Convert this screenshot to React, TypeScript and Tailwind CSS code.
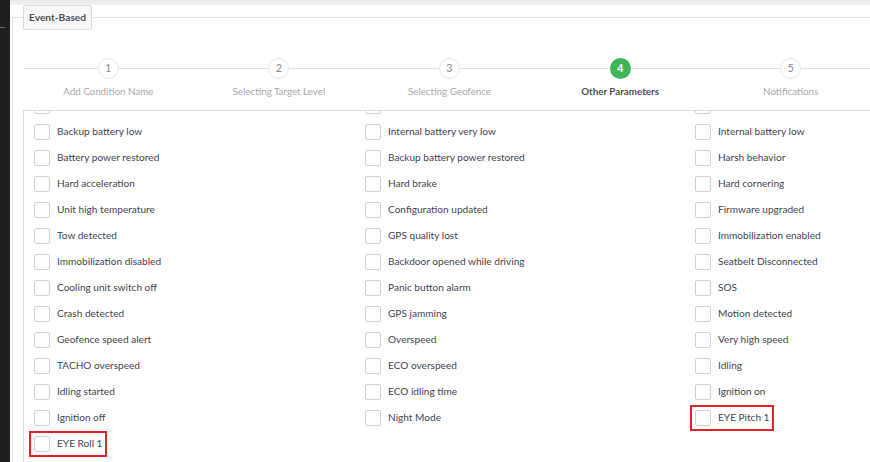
import React from 'react';

const steps = [
  { n: 1, label: 'Add Condition Name' },
  { n: 2, label: 'Selecting Target Level' },
  { n: 3, label: 'Selecting Geofence' },
  { n: 4, label: 'Other Parameters', active: true },
  { n: 5, label: 'Notifications' },
];

// rows of three, left to right
const events: string[] = [
  'Unit is moving', 'Main power cut', 'Low battery',
  'Backup battery low', 'Internal battery very low', 'Internal battery low',
  'Battery power restored', 'Backup battery power restored', 'Harsh behavior',
  'Hard acceleration', 'Hard brake', 'Hard cornering',
  'Unit high temperature', 'Configuration updated', 'Firmware upgraded',
  'Tow detected', 'GPS quality lost', 'Immobilization enabled',
  'Immobilization disabled', 'Backdoor opened while driving', 'Seatbelt Disconnected',
  'Cooling unit switch off', 'Panic button alarm', 'SOS',
  'Crash detected', 'GPS jamming', 'Motion detected',
  'Geofence speed alert', 'Overspeed', 'Very high speed',
  'TACHO overspeed', 'ECO overspeed', 'Idling',
  'Idling started', 'ECO idling time', 'Ignition on',
  'Ignition off', 'Night Mode', 'EYE Pitch 1',
  'EYE Roll 1',
];

const highlighted = ['EYE Pitch 1', 'EYE Roll 1'];

const Check = ({ label }: { label: string }) => {
  const marked = highlighted.includes(label);
  return (
    <div className="flex h-[26px] items-center">
      <label
        className={
          'inline-flex h-4 items-center gap-[7px] ' +
          (marked ? 'outline-2 outline-offset-[3px] outline-[#e5202a]' : '')
        }
      >
        <span className="h-4 w-4 shrink-0 rounded-[2px] border border-[#cfd3d8] bg-white" />
        <span className="whitespace-nowrap text-[10.1px] text-[#3f4550]">{label}</span>
      </label>
    </div>
  );
};

export default function App() {
  return (
    <div className="flex h-[462px] w-[870px] overflow-hidden bg-white font-['Lato','Open_Sans',sans-serif]">
      {/* dark sidebar edge */}
      <div className="w-[10px] shrink-0 bg-[#1e1e1e] pt-[27px]">
        <div className="h-px w-[5px] bg-[#6b6b6b]" />
      </div>

      <div className="flex min-w-0 flex-1 flex-col bg-[#f6f6f6]">
        <div className="h-[5px] shrink-0 bg-gradient-to-b from-[#e9e9e9] to-[#f3f3f3]" />
        <div className="flex-1 bg-white pl-[2px]">
          <fieldset className="h-full border-l border-t border-[#e4e4e4] pl-[10px]">
            <legend className="rounded-[2px] border border-[#dcdcdc] bg-[#f8f8f8] px-[5px] py-[5px] text-[10.2px] font-bold leading-[13px] text-[#4b4f56]">
              Event-Based
            </legend>

            {/* stepper */}
            <div className="relative mt-[28px]">
              <div className="absolute left-0 right-0 top-[10px] h-px bg-[#e2e2e2]" />
              <div className="grid w-[853px] grid-cols-5">
                {steps.map((s) => (
                  <div key={s.n} className="relative flex flex-col items-center">
                    <div
                      className={
                        'flex h-[21px] w-[21px] items-center justify-center rounded-full text-[11px] ' +
                        (s.active
                          ? 'bg-[#3fb45a] font-bold text-white'
                          : 'border border-[#e6e6e6] bg-white text-[#8d8d8d]')
                      }
                    >
                      {s.n}
                    </div>
                    <div
                      className={
                        'mt-[5px] whitespace-nowrap text-[9.8px] leading-[14px] ' +
                        (s.active ? 'font-bold text-[#4b4f56]' : 'text-[#a9a9a9]')
                      }
                    >
                      {s.label}
                    </div>
                  </div>
                ))}
              </div>
            </div>

            {/* event list */}
            <div className="mt-[12px] h-[400px] overflow-hidden border-l border-t border-[#dedede]">
              <div className="-mt-[18px] grid grid-cols-[331px_330px_1fr] pl-[10px]">
                {events.map((e) => (
                  <Check key={e} label={e} />
                ))}
              </div>
            </div>
          </fieldset>
        </div>
      </div>
    </div>
  );
}
